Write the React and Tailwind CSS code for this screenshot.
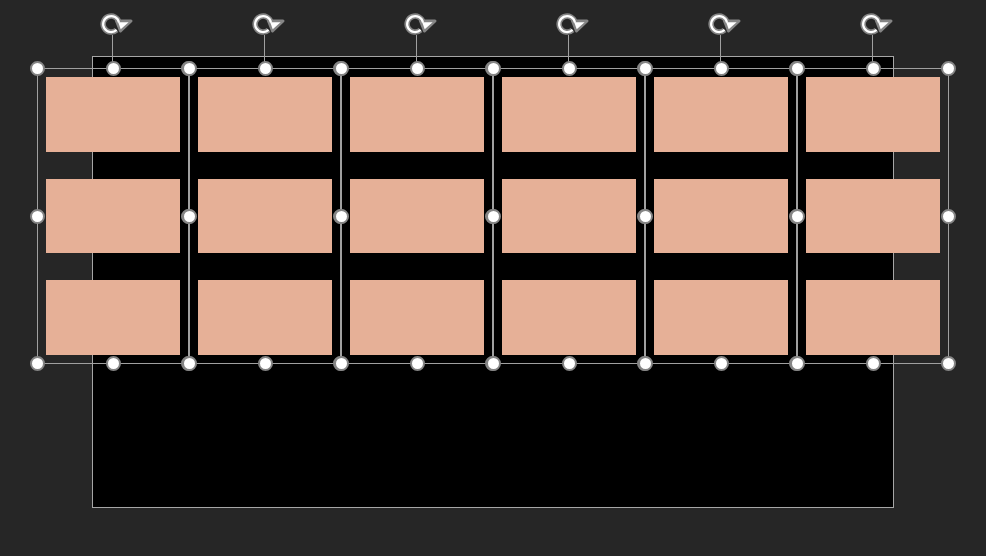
import React from "react";

const cols = [0, 1, 2, 3, 4, 5];
const rows = [0, 1, 2];

const Handle = () => (
  <div className="w-[15px] h-[15px] rounded-full bg-white border-[2.5px] border-[#858585]" />
);

// rotate glyph: white arc with grey halo, arrowhead pointing down at 3 o'clock
const RotateIcon = () => (
  <svg width="40" height="24" viewBox="0 0 40 24">
    <path d="M23.6 18.9 A8 8 0 1 1 26 11.6" fill="none" stroke="#858585" strokeWidth="5.5" />
    <polygon points="23.5,10 38,10 27.5,20" fill="#858585" stroke="#858585" strokeWidth="3" strokeLinejoin="round" />
    <path d="M23.6 18.9 A8 8 0 1 1 26 11.6" fill="none" stroke="#ffffff" strokeWidth="2.2" />
    <polygon points="25.2,11.2 35.6,11.2 27.7,18.2" fill="#ffffff" />
  </svg>
);

const Column = () => (
  <div className="relative w-[152px] h-[296px] border border-[#a0a0a0] p-2 flex flex-col gap-[27px]">
    {rows.map((r) => (
      <div key={r} className="w-[134px] h-[75px] bg-[#e6b097]" />
    ))}

    {/* rotation handle */}
    <div className="absolute bottom-full left-[74px] flex flex-col items-center w-px mb-px">
      <RotateIcon />
      <div className="w-px h-[33px] bg-[#a0a0a0]" />
    </div>

    {/* resize handles */}
    <div className="absolute -inset-[8px] flex flex-col justify-between">
      <div className="flex justify-between">
        <Handle />
        <Handle />
        <Handle />
      </div>
      <div className="flex justify-between">
        <Handle />
        <Handle />
      </div>
      <div className="flex justify-between">
        <Handle />
        <Handle />
        <Handle />
      </div>
    </div>
  </div>
);

export default function App() {
  return (
    <div className="relative w-[986px] h-[556px] bg-[#262626] overflow-hidden pt-[56px]">
      <div className="ml-[92px] w-[802px] h-[452px] bg-black border border-[#a6a6a6]" />

      {/* selected group of six columns */}
      <div className="absolute left-[37px] top-[68px] flex">
        {cols.map((c) => (
          <Column key={c} />
        ))}
      </div>
    </div>
  );
}
